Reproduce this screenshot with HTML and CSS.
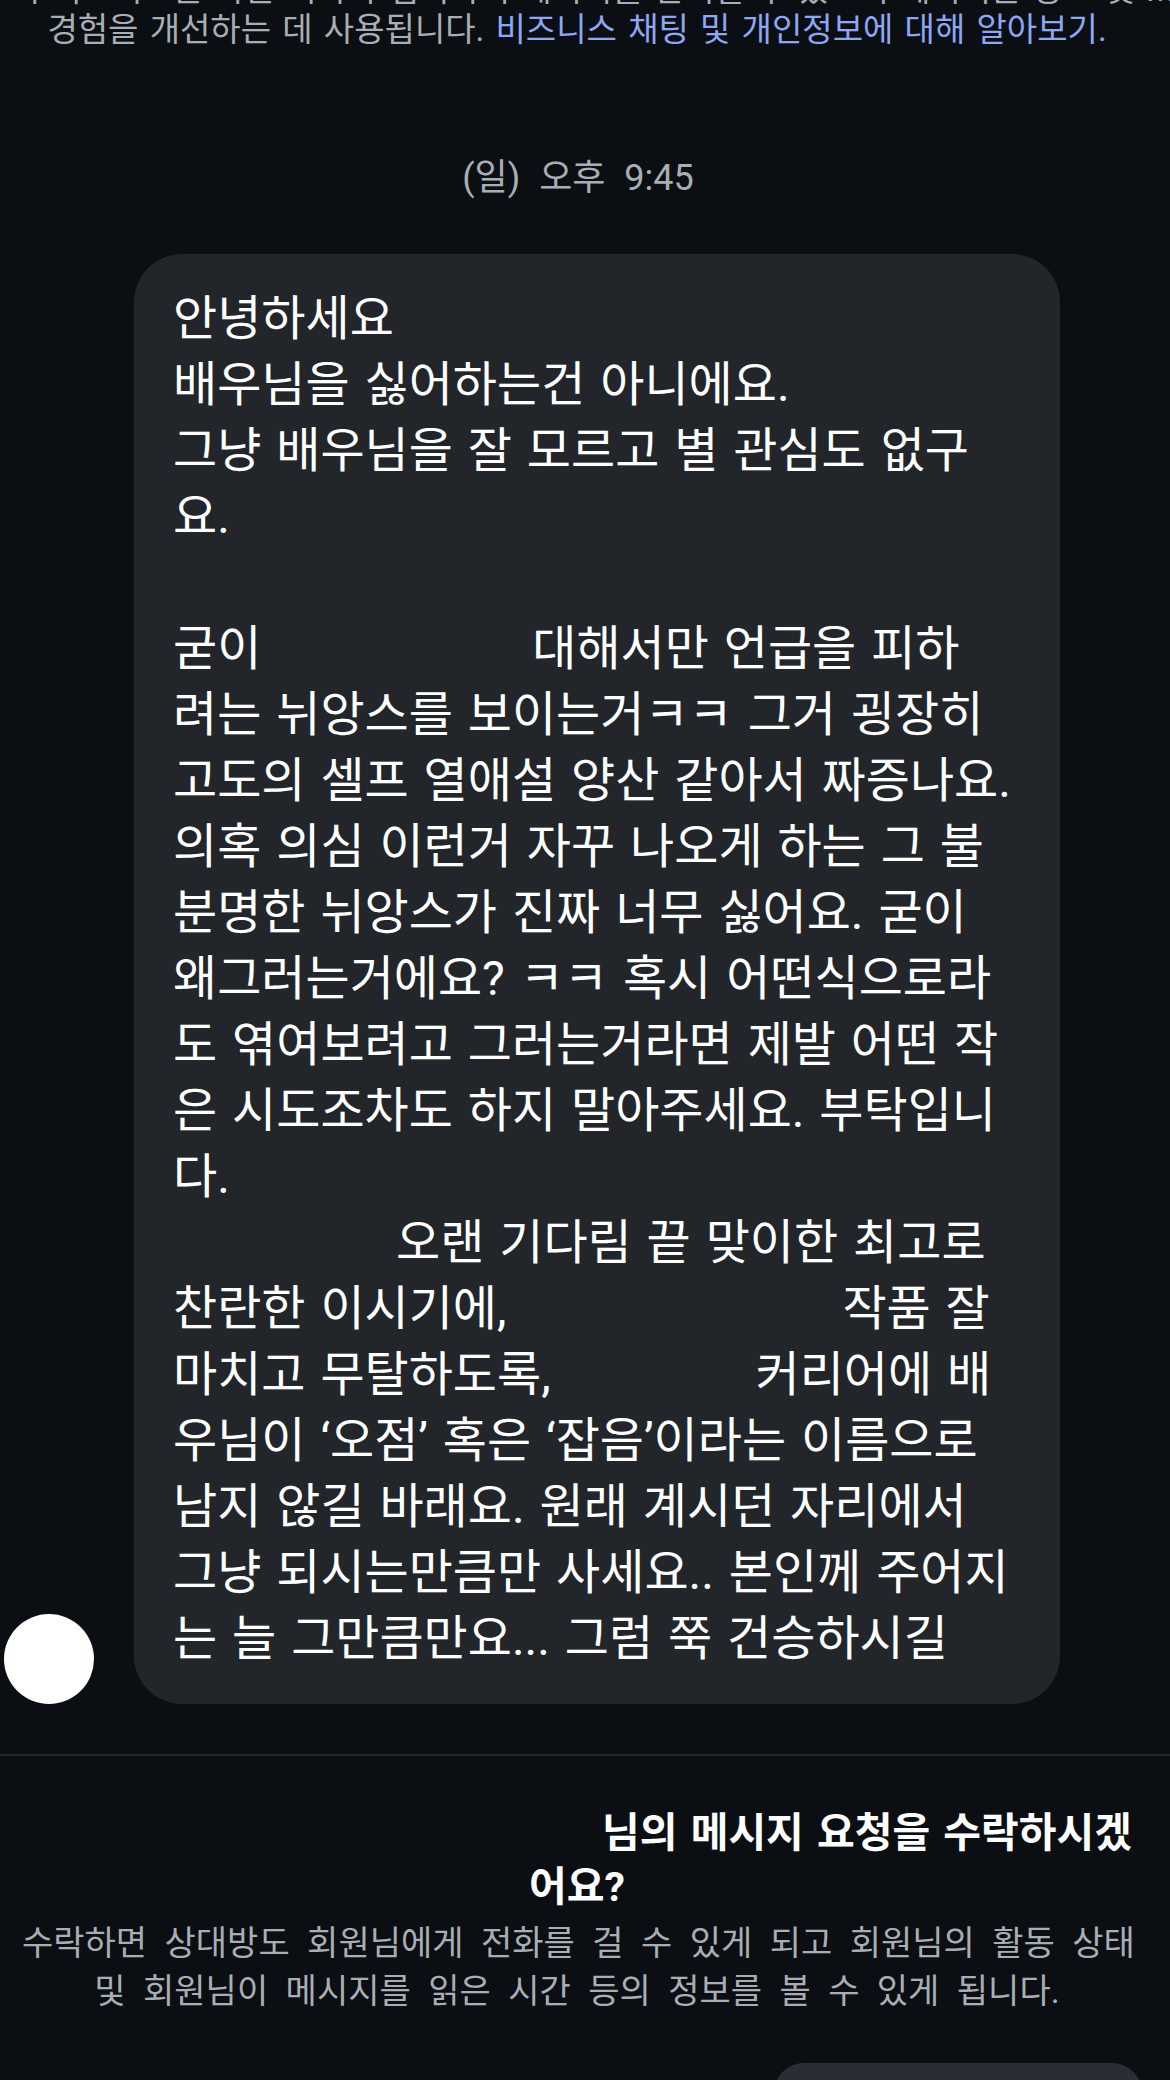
FILE: index.html
```html
<!DOCTYPE html>
<html lang="ko">
<head>
    <meta charset="UTF-8">
    <meta name="viewport" content="width=device-width, initial-scale=1.0">
    <title>메시지 요청</title>
    <link rel="stylesheet" href="styles.css">
</head>
<body>
    <div class="thread">
        <p class="notice">
            이 비즈니스는 다른 회사와 협력하여 메시지를 관리할 수 있으며 메시지는 광고 및 Meta의<br>
            경험을 개선하는 데 사용됩니다. <a href="#" class="notice-link">비즈니스 채팅 및 개인정보에 대해 알아보기.</a>
        </p>

        <div class="timestamp">(일) 오후 9:45</div>

        <div class="message-row">
            <div class="avatar"></div>
            <div class="bubble">
                안녕하세요<br>
                배우님을 싫어하는건 아니에요.<br>
                그냥 배우님을 잘 모르고 별 관심도 없구<br>
                요.<br>
                <br>
                굳이 <span class="blank blank-1"></span>대해서만 언급을 피하<br>
                려는 뉘앙스를 보이는거ㅋㅋ 그거 굉장히<br>
                고도의 셀프 열애설 양산 같아서 짜증나요.<br>
                의혹 의심 이런거 자꾸 나오게 하는 그 불<br>
                분명한 뉘앙스가 진짜 너무 싫어요. 굳이<br>
                왜그러는거에요? ㅋㅋ 혹시 어떤식으로라<br>
                도 엮여보려고 그러는거라면 제발 어떤 작<br>
                은 시도조차도 하지 말아주세요. 부탁입니<br>
                다.<br>
                <span class="blank blank-2"></span>오랜 기다림 끝 맞이한 최고로<br>
                찬란한 이시기에, <span class="blank blank-3"></span>작품 잘<br>
                마치고 무탈하도록, <span class="blank blank-4"></span>커리어에 배<br>
                우님이 ‘오점’ 혹은 ‘잡음’이라는 이름으로<br>
                남지 않길 바래요. 원래 계시던 자리에서<br>
                그냥 되시는만큼만 사세요.. 본인께 주어지<br>
                는 늘 그만큼만요... 그럼 쭉 건승하시길
            </div>
        </div>
    </div>

    <div class="request">
        <h2 class="request-title"><span class="blank name-blank"></span>님의 메시지 요청을 수락하시겠<br>어요?</h2>
        <p class="request-desc">
            수락하면 상대방도 회원님에게 전화를 걸 수 있게 되고 회원님의 활동 상태<br>
            및 회원님이 메시지를 읽은 시간 등의 정보를 볼 수 있게 됩니다.
        </p>
        <div class="request-actions">
            <button class="btn-accept" type="button"></button>
        </div>
    </div>
</body>
</html>
```

FILE: styles.css
```css
html, body {
    margin: 0;
    padding: 0;
    background-color: #0b0e12;
    overflow: hidden;
}
body {
    font-family: Roboto, "Noto Sans CJK KR", sans-serif;
    color: #ffffff;
    width: 1170px;
    height: 2080px;
}
.notice {
    margin: -30px 0 0;
    padding: 0 26px 0 10px;
    font-size: 33px;
    line-height: 40px;
    color: #a9aeb5;
    text-align: center;
    white-space: nowrap;
    word-spacing: 3px;
    overflow: hidden;
}
.notice-link {
    color: #8ea6f4;
    text-decoration: none;
}
.timestamp {
    margin-top: 108px;
    padding-right: 14px;
    font-size: 36px;
    line-height: 40px;
    color: #a9aeb5;
    text-align: center;
    word-spacing: 10px;
}
.message-row {
    display: flex;
    align-items: flex-end;
    gap: 40px;
    margin-top: 56px;
    padding-left: 4px;
}
.avatar {
    width: 90px;
    height: 90px;
    border-radius: 50%;
    background-color: #ffffff;
    flex-shrink: 0;
}
.bubble {
    width: 926px;
    box-sizing: border-box;
    padding: 32px 30px 32px 39px;
    background-color: #22262b;
    border-radius: 48px;
    font-size: 48px;
    line-height: 66px;
    white-space: nowrap;
    word-spacing: 3px;
}
/* redacted parts of the text */
.blank {
    display: inline-block;
    height: 1em;
    vertical-align: middle;
}
.blank-1 {
    width: 256px;
}
.blank-2 {
    width: 223px;
}
.blank-3 {
    width: 321px;
}
.blank-4 {
    width: 190px;
}
.request {
    margin-top: 50px;
    border-top: 2px solid #22262b;
    padding: 50px 38px 0 22px;
    text-align: center;
}
.request-title {
    margin: 0;
    font-size: 41px;
    line-height: 54px;
    font-weight: 700;
    white-space: nowrap;
    word-spacing: 3px;
}
.name-blank {
    width: 580px;
}
.request-desc {
    margin: 5px 0 0;
    font-size: 34px;
    line-height: 48px;
    color: #a9aeb5;
    white-space: nowrap;
    word-spacing: 9px;
}
.request-actions {
    display: flex;
    justify-content: flex-end;
    margin: 48px -10px 0 0;
}
.btn-accept {
    width: 368px;
    height: 80px;
    border: none;
    border-radius: 30px;
    background-color: #2a2e34;
}
```
